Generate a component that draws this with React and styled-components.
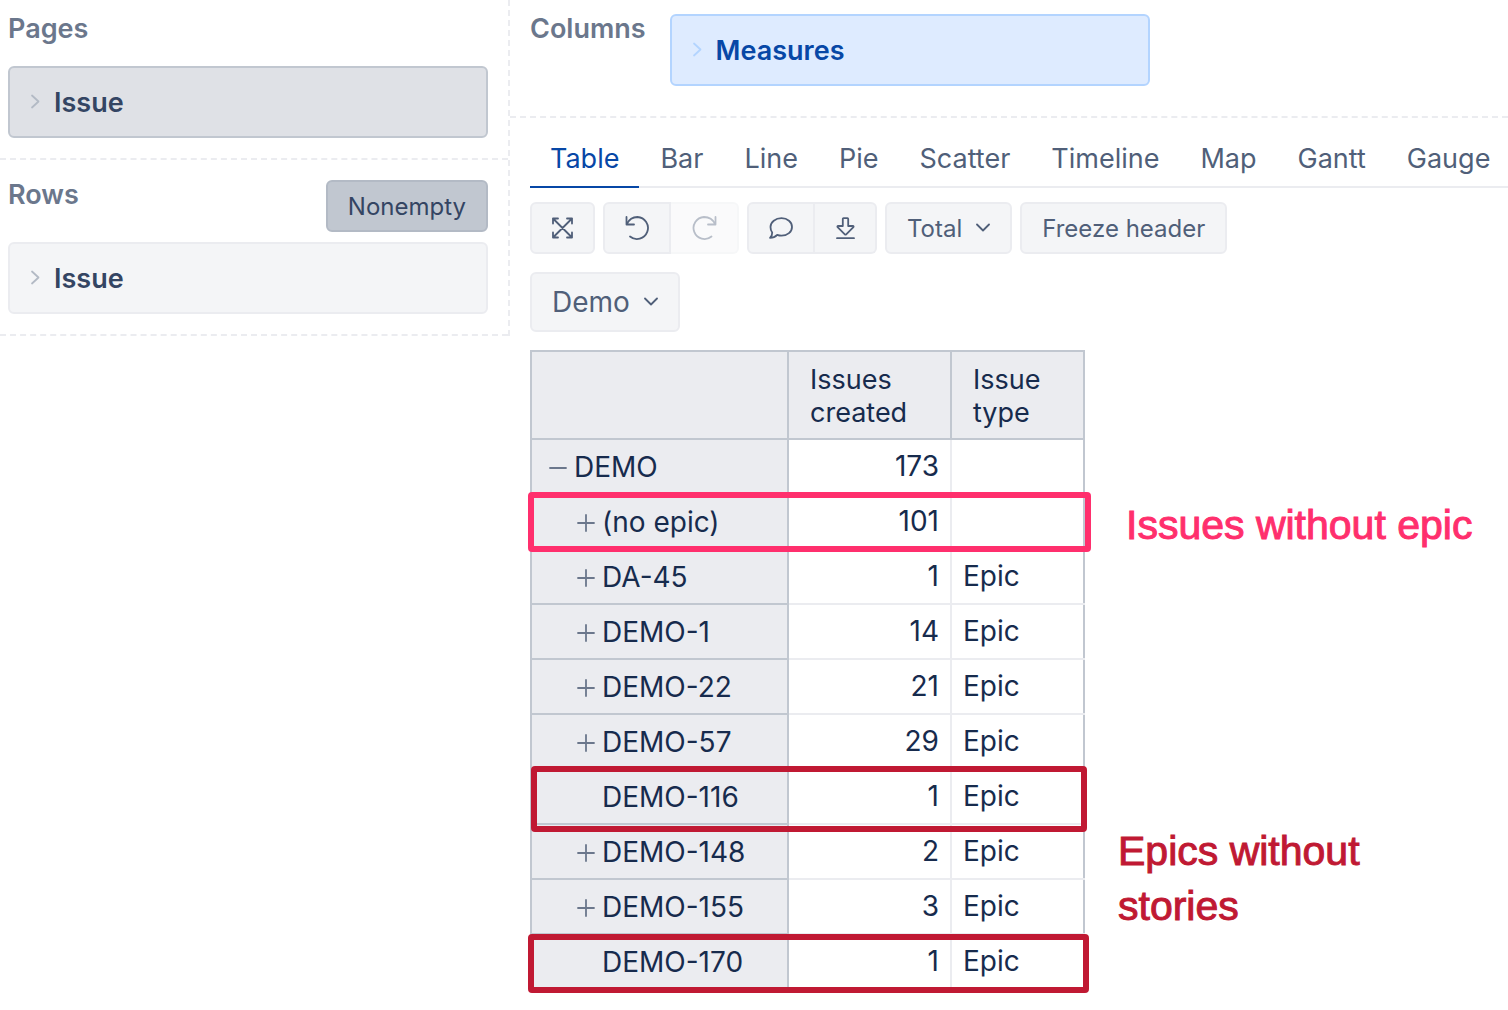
import React, { useState } from 'react'
import styled, { createGlobalStyle, css } from 'styled-components'


const GlobalStyle = createGlobalStyle`
  * {
    box-sizing: border-box;
  }

  body {
    margin: 0;
    background: #ffffff;
    color: #172b4d;
    font-family: Inter, "Liberation Sans", sans-serif;
    font-size: 28px;
    line-height: 33px;
  }

  button {
    font-family: inherit;
    cursor: pointer;
  }
`

const Page = styled.div`
  display: flex;
  align-items: flex-start;
  padding-bottom: 20px;
`

const Sidebar = styled.aside`
  flex: 0 0 510px;
  border-right: 2px dashed #ebecf0;
`

const Section = styled.section`
  padding: 12px 20px 20px 8px;
  border-bottom: 2px dashed #ebecf0;
`

const SectionHeader = styled.div`
  display: flex;
  align-items: flex-start;
  justify-content: space-between;
  height: ${({ $tall }) => ($tall ? '70px' : '54px')};
`

const SectionTitle = styled.h2`
  margin: 0;
  padding-top: ${({ $offset }) => $offset || '0'};
  color: #6b778c;
  font-size: 27px;
  font-weight: 600;
  line-height: 33px;
`

const palettes = {
  pages: css`
    background: #dfe1e6;
    border-color: #c1c7d0;
    color: #344563;
    --chevron: #b3bac5;
  `,
  rows: css`
    background: #f4f5f7;
    border-color: #ebecf0;
    color: #344563;
    --chevron: #b3bac5;
  `,
  columns: css`
    background: #deebff;
    border-color: #b3d4ff;
    color: #0747a6;
    --chevron: #b3d4ff;
  `,
}

const DimensionBox = styled.button`
  display: flex;
  align-items: center;
  gap: 14px;
  width: 100%;
  max-width: 480px;
  height: 72px;
  padding: 0 20px;
  border: 2px solid;
  border-radius: 6px;
  font-size: 27px;
  font-weight: 600;
  line-height: 33px;
  ${({ $palette }) => palettes[$palette]}

  svg {
    color: var(--chevron);
  }
`

const Main = styled.main`
  flex: 1;
  min-width: 0;
`

const ColumnsBar = styled.section`
  display: flex;
  align-items: flex-start;
  gap: 24px;
  padding: 12px 20px 30px;
  border-bottom: 2px dashed #ebecf0;
`

const ColumnsDrop = styled.div`
  flex: 1;
  padding-top: 2px;
`

const Report = styled.div`
  padding-left: 20px;
`

const Tabs = styled.div`
  display: flex;
  gap: 1px;
  height: 70px;
  overflow: hidden;
  box-shadow: inset 0 -2px 0 #ebecf0;
`

const Tab = styled.button`
  flex: none;
  padding: 12px 20px 0;
  border: 0;
  border-bottom: 2px solid ${({ $active }) => ($active ? '#0747a6' : 'transparent')};
  background: none;
  color: ${({ $active }) => ($active ? '#0747a6' : '#505f79')};
  font-size: 27px;
  line-height: 33px;
`

const Toolbar = styled.div`
  display: flex;
  gap: 8px;
  padding: 14px 0 18px;
`

const ButtonGroup = styled.div`
  display: flex;

  button:first-child {
    border-radius: 6px 0 0 6px;
  }

  button:last-child {
    border-left: 0;
    border-radius: 0 6px 6px 0;
  }
`

const Button = styled.button`
  display: flex;
  align-items: center;
  gap: 14px;
  height: ${({ $large }) => ($large ? '60px' : '52px')};
  padding: 0 20px;
  border: 2px solid #ebecf0;
  border-radius: 6px;
  background: #f4f5f7;
  color: #505f79;
  font-size: ${({ $large }) => ($large ? '28px' : '24px')};
  line-height: 33px;
  white-space: nowrap;

  &:disabled {
    opacity: 0.4;
    cursor: default;
  }
`

const ToggleButton = styled(Button)`
  margin-top: 8px;
  background: #c1c7d0;
  border-color: #b3bac5;
  color: #344563;
`

const Results = styled.div`
  display: flex;
  align-items: flex-start;
  gap: 33px;
  padding-top: 18px;
`

const TableArea = styled.div`
  position: relative;
`

const Table = styled.table`
  width: 555px;
  table-layout: fixed;
  border-collapse: collapse;
`

const Col = styled.col`
  width: ${({ $width }) => $width};
`

const HeadCell = styled.th`
  height: 88px;
  padding: 11px 21px 9px;
  border: 2px solid #c1c7d0;
  background: #ebecf0;
  font-size: 27px;
  font-weight: 400;
  text-align: left;
`

const RowHead = styled.th`
  height: 55px;
  padding: 0 0 0 ${({ $depth }) => ($depth ? '44px' : '16px')};
  border: 2px solid #c1c7d0;
  background: #ebecf0;
  font-weight: 400;
  text-align: left;
`

const Member = styled.div`
  display: flex;
  align-items: center;
  gap: 6px;
  padding-top: 2px;
`

const Expander = styled.button`
  display: flex;
  width: 20px;
  padding: 0;
  border: 0;
  background: none;
  color: #6b778c;
`

const Indent = styled.span`
  width: 20px;
`

const Cell = styled.td`
  padding: 9px 11px 10px;
  border: 2px solid #ebecf0;
  text-align: ${({ $numeric }) => ($numeric ? 'right' : 'left')};

  &:last-child {
    border-right-color: #c1c7d0;
  }
`

// frames drawn over the table rows
const Highlight = styled.div`
  position: absolute;
  top: ${({ $top }) => $top};
  left: ${({ $left }) => $left};
  right: ${({ $right }) => $right};
  height: ${({ $height }) => $height};
  border: 6px solid ${({ $color }) => $color};
  border-radius: 4px;
  pointer-events: none;
`

const Notes = styled.div`
  flex: 1;
  min-width: 0;
  padding-top: 148px;
`

const Note = styled.p`
  margin: 0;
  max-width: 370px;
  padding-left: ${({ $indent }) => $indent || '0'};
  color: ${({ $color }) => $color};
  font-family: "Liberation Sans", Arial, sans-serif;
  font-size: 41px;
  line-height: 55px;
  -webkit-text-stroke: 1px ${({ $color }) => $color};

  & + & {
    max-width: 280px;
    margin-top: 271px;
  }
`

const Icon = ({ width, height, children }) => (
  <svg
    width={width}
    height={height}
    viewBox={`0 0 ${width} ${height}`}
    fill="none"
    stroke="currentColor"
    strokeWidth="1.8"
    strokeLinecap="round"
    strokeLinejoin="round"
    aria-hidden="true"
  >
    {children}
  </svg>
)

const ChevronRight = () => (
  <Icon width={10} height={16}><path d="M2 1.500l6.500 6-6.500 6" /></Icon>
)

const ChevronDown = () => (
  <Icon width={14} height={10}><path d="M1 1.500l6 6 6-6" /></Icon>
)

const ExpandIcon = () => (
  <Icon width={21} height={22}>
    <path d="M1 1.5l19 19M20 1.5l-19 19M1 6.5v-5h5M15 1.5h5v5M20 15.500v5h-5M6 20.500h-5v-5" />
  </Icon>
)

const UndoIcon = () => (
  <Icon width={24} height={26}>
    <path d="M1.500 2v7.500h7.500M2 9C4 4.500 8 2 12.500 2a11 11 0 1 1-7.500 19.500" />
  </Icon>
)

const RedoIcon = () => (
  <Icon width={26} height={26}>
    <path d="M24.500 2v7.500h-7.500M24 9C22 4.500 18 2 13 2a11 11 0 1 0 7.500 19.500" />
  </Icon>
)

const CommentIcon = () => (
  <Icon width={24} height={22}>
    <path d="M12.500 1.200c6 0 10.500 3.800 10.500 8.700s-4.500 8.800-10.500 8.800c-1.600 0-3-.3-4.300-.8C6.500 19.700 4 20.800 1 20.800c1.700-1.500 2.300-3.300 2.200-5.300C2 14 1.500 12.200 1.500 9.900 1.500 5 6.500 1.200 12.500 1.200z" />
  </Icon>
)

const DownloadIcon = () => (
  <Icon width={20} height={23}>
    <path d="M8.500 1.200h4a.7.7 0 0 1 .7.7V9h4.700c.7 0 .9.600.5 1.100l-7.200 7.200a1 1 0 0 1-1.400 0L2.600 10.100C2.200 9.600 2.400 9 3.100 9h4.700V1.900a.7.7 0 0 1 .7-.7zM2 21.200h17" />
  </Icon>
)

const PlusIcon = () => (
  <Icon width={20} height={20}><path d="M2 10h16M10 2v16" /></Icon>
)

const MinusIcon = () => (
  <Icon width={20} height={20}><path d="M2 10h16" /></Icon>
)

const tabs = ['Table', 'Bar', 'Line', 'Pie', 'Scatter', 'Timeline', 'Map', 'Gantt', 'Gauge']

const rows = [
  { name: 'DEMO', created: 173, type: '', depth: 0, toggle: 'minus' },
  { name: '(no epic)', created: 101, type: '', depth: 1, toggle: 'plus' },
  { name: 'DA-45', created: 1, type: 'Epic', depth: 1, toggle: 'plus' },
  { name: 'DEMO-1', created: 14, type: 'Epic', depth: 1, toggle: 'plus' },
  { name: 'DEMO-22', created: 21, type: 'Epic', depth: 1, toggle: 'plus' },
  { name: 'DEMO-57', created: 29, type: 'Epic', depth: 1, toggle: 'plus' },
  { name: 'DEMO-116', created: 1, type: 'Epic', depth: 1 },
  { name: 'DEMO-148', created: 2, type: 'Epic', depth: 1, toggle: 'plus' },
  { name: 'DEMO-155', created: 3, type: 'Epic', depth: 1, toggle: 'plus' },
  { name: 'DEMO-170', created: 1, type: 'Epic', depth: 1 },
]

const Dimension = ({ name, palette }) => (
  <DimensionBox type="button" $palette={palette}>
    <ChevronRight />
    {name}
  </DimensionBox>
)

const ResultRow = ({ row }) => (
  <tr>
    <RowHead scope="row" $depth={row.depth}>
      <Member>
        {row.toggle ? (
          <Expander type="button" aria-label={`Toggle ${row.name}`}>
            {row.toggle === 'plus' ? <PlusIcon /> : <MinusIcon />}
          </Expander>
        ) : <Indent />}
        {row.name}
      </Member>
    </RowHead>
    <Cell $numeric>{row.created}</Cell>
    <Cell>{row.type}</Cell>
  </tr>
)

export default function App() {
  const [activeTab, setActiveTab] = useState('Table')

  return (
    <>
      <GlobalStyle />
      <Page>
        <Sidebar>
          <Section>
            <SectionHeader>
              <SectionTitle>Pages</SectionTitle>
            </SectionHeader>
            <Dimension name="Issue" palette="pages" />
          </Section>
          <Section>
            <SectionHeader $tall>
              <SectionTitle $offset="6px">Rows</SectionTitle>
              <ToggleButton type="button" aria-pressed="true">Nonempty</ToggleButton>
            </SectionHeader>
            <Dimension name="Issue" palette="rows" />
          </Section>
        </Sidebar>

        <Main>
          <ColumnsBar>
            <SectionTitle>Columns</SectionTitle>
            <ColumnsDrop>
              <Dimension name="Measures" palette="columns" />
            </ColumnsDrop>
          </ColumnsBar>

          <Report>
            <Tabs role="tablist">
              {tabs.map((tab) => (
                <Tab
                  key={tab}
                  type="button"
                  role="tab"
                  aria-selected={tab === activeTab}
                  $active={tab === activeTab}
                  onClick={() => setActiveTab(tab)}
                >
                  {tab}
                </Tab>
              ))}
            </Tabs>

            <Toolbar>
              <Button type="button" aria-label="Full screen"><ExpandIcon /></Button>
              <ButtonGroup>
                <Button type="button" aria-label="Undo"><UndoIcon /></Button>
                <Button type="button" aria-label="Redo" disabled><RedoIcon /></Button>
              </ButtonGroup>
              <ButtonGroup>
                <Button type="button" aria-label="Comment"><CommentIcon /></Button>
                <Button type="button" aria-label="Download"><DownloadIcon /></Button>
              </ButtonGroup>
              <Button type="button" aria-haspopup="menu">Total <ChevronDown /></Button>
              <Button type="button">Freeze header</Button>
            </Toolbar>

            <Button type="button" $large aria-haspopup="menu">Demo <ChevronDown /></Button>

            <Results>
              <TableArea>
                <Table>
                  <colgroup>
                    <Col $width="257px" />
                    <Col $width="163px" />
                    <Col $width="133px" />
                  </colgroup>
                  <thead>
                    <tr>
                      <HeadCell />
                      <HeadCell scope="col">Issues created</HeadCell>
                      <HeadCell scope="col">Issue type</HeadCell>
                    </tr>
                  </thead>
                  <tbody>
                    {rows.map((row) => <ResultRow key={row.name} row={row} />)}
                  </tbody>
                </Table>
                <Highlight $color="#ff2f6d" $top="142px" $left="-2px" $right="-6px" $height="60px" />
                <Highlight $color="#c01933" $top="416px" $left="1px" $right="-2px" $height="66px" />
                <Highlight $color="#c01933" $top="584px" $left="-2px" $right="-4px" $height="59px" />
              </TableArea>
              <Notes>
                <Note $color="#ff2f6d" $indent="8px">Issues without epic</Note>
                <Note $color="#c01933">Epics without stories</Note>
              </Notes>
            </Results>
          </Report>
        </Main>
      </Page>
    </>
  )
}
